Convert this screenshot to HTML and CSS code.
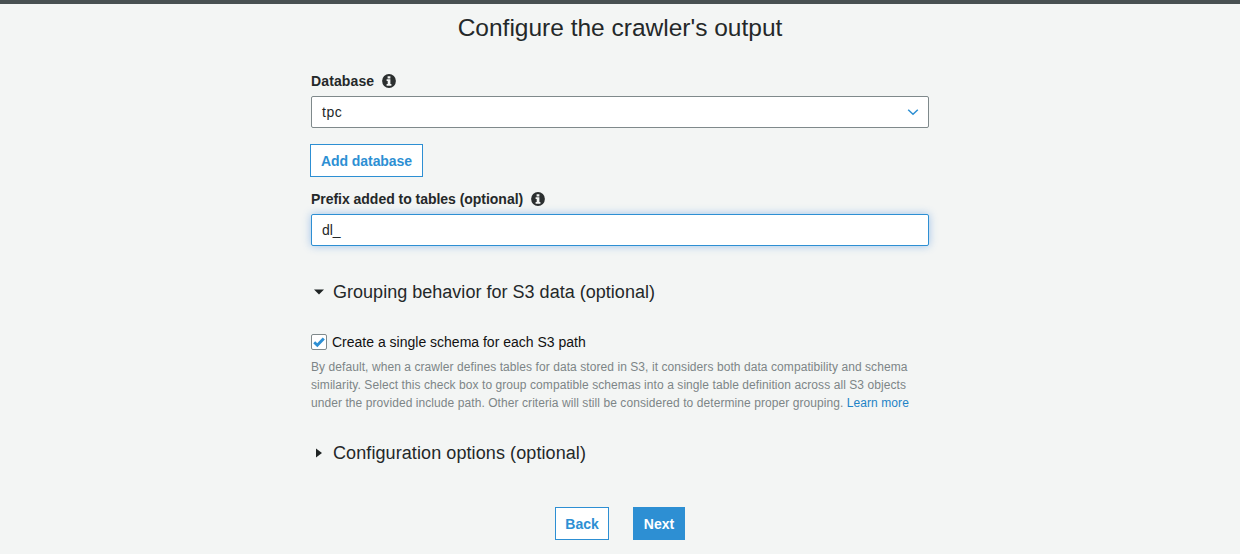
FILE: index.html
```
<!DOCTYPE html>
<html lang="en">
<head>
<meta charset="utf-8">
<title>Add crawler</title>
<link rel="stylesheet" href="styles.css">
</head>
<body>
<div class="topbar"></div>
<main class="wizard">
  <h1 class="title">Configure the crawler's output</h1>

  <div class="label"><span class="label-database">Database</span>
    <svg class="info" viewBox="0 0 14 14"><circle cx="7" cy="7" r="6.9" fill="#2b2f2f"/><path d="M5.600 2.200h2.800v2.200H5.600zM4.600 5.300h3.800v4.700h1v1.700H4.600V10h1.100V6.900H4.600z" fill="#f3f5f4"/></svg>
  </div>
  <div class="field select"><span class="value-database">tpc</span>
    <svg class="chevron" viewBox="0 0 12 8"><path d="M1.200 1.700 6 6.200l4.800-4.500" fill="none" stroke="#2d8fd3" stroke-width="1.500"/></svg>
  </div>
  <button class="btn add">Add database</button>

  <div class="label"><span class="label-prefix">Prefix added to tables (optional)</span>
    <svg class="info" viewBox="0 0 14 14"><circle cx="7" cy="7" r="6.900" fill="#2b2f2f"/><path d="M5.600 2.200h2.800v2.200H5.600zM4.600 5.300h3.800v4.700h1v1.700H4.600V10h1.100V6.900H4.600z" fill="#f3f5f4"/></svg>
  </div>
  <div class="field focused"><span class="value-prefix">dl_</span></div>

  <h2 class="section grouping"><svg class="caret" viewBox="0 0 10 10"><path d="M0 2.500h10L5 7.500z" fill="#1f2424"/></svg><span>Grouping behavior for S3 data (optional)</span></h2>

  <div class="check-row">
    <span class="checkbox"><svg viewBox="0 0 14 14"><path d="M2.200 7.300 5.300 10.300 11.800 3.400" fill="none" stroke="#2d8fd3" stroke-width="2.900"/></svg></span>
    <span class="check-label">Create a single schema for each S3 path</span>
  </div>
  <p class="help">
    <span class="line">By default, when a crawler defines tables for data stored in S3, it considers both data compatibility and schema</span>
    <span class="line">similarity. Select this check box to group compatible schemas into a single table definition across all S3 objects</span>
    <span class="line">under the provided include path. Other criteria will still be considered to determine proper grouping. <a class="link">Learn more</a></span>
  </p>

  <h2 class="section config"><svg class="caret" viewBox="0 0 10 10"><path d="M2 .5v9l6-4.500z" fill="#1f2424"/></svg><span>Configuration options (optional)</span></h2>

  <div class="actions">
    <button class="btn back">Back</button>
    <button class="btn next">Next</button>
  </div>
</main>
</body>
</html>
```
FILE: styles.css
```
* { box-sizing: border-box; }
body {
  margin: 0;
  height: 554px;
  overflow: hidden;
  background: #f3f5f4;
  color: #242829;
  font-family: "Liberation Sans", Arial, sans-serif;
  font-size: 14px;
}
.topbar { height: 4px; background: #485052; }
.wizard { width: 618px; margin: 0 auto; }
.title {
  margin: 9px 0 0;
  font-size: 24.5px;
  line-height: 30px;
  font-weight: 400;
  text-align: center;
  white-space: nowrap;
}
.label {
  display: flex;
  align-items: center;
  gap: 8px;
  height: 18px;
  font-weight: 700;
  line-height: 18px;
}
.label-database { letter-spacing: .12px; }
.label-prefix { letter-spacing: -.03px; }
.title + .label { margin-top: 29px; }
.info { width: 14px; height: 14px; }
.field {
  display: flex;
  align-items: center;
  justify-content: space-between;
  height: 32px;
  margin-top: 6px;
  padding: 0 9px 0 10px;
  border: 1px solid #7f898b;
  border-radius: 2px;
  background: #fff;
  line-height: 18px;
}
.value-database { letter-spacing: .5px; }
.value-prefix { letter-spacing: -.1px; }
.chevron { width: 12px; height: 8px; }
.focused {
  border-color: #2d8fd3;
  box-shadow: 0 0 9px rgba(45, 125, 220, .42);
}
.btn {
  height: 33px;
  padding: 0;
  border: 1px solid #2d8fd3;
  background: #fff;
  color: #2d8fd3;
  font: 700 14px/18px "Liberation Sans", Arial, sans-serif;
  text-align: center;
}
.add { display: block; width: 113px; margin: 16px 0 13px -1px; letter-spacing: -.06px; }
.section {
  display: flex;
  align-items: center;
  gap: 9px;
  height: 24px;
  padding-left: 3px;
  font-size: 18px;
  line-height: 24px;
  font-weight: 400;
  white-space: nowrap;
}
.caret { width: 10px; height: 10px; }
.grouping { margin: 34px 0 0; letter-spacing: .02px; }
.check-row {
  display: flex;
  align-items: center;
  gap: 5px;
  height: 18px;
  margin-top: 29px;
  line-height: 18px;
}
.checkbox {
  width: 16px;
  height: 16px;
  border: 1px solid #7f898b;
  border-radius: 2px;
  background: #fff;
}
.checkbox svg { display: block; width: 14px; height: 14px; }
.check-label { color: #111; }
.help {
  margin: 7px 0 0;
  color: #7d8587;
  font-size: 12px;
  line-height: 18px;
  letter-spacing: .073px;
}
.line { display: block; white-space: nowrap; }
.link { color: #1e83c6; }
.config { margin: 29px 0 0; letter-spacing: .09px; }
.actions {
  display: flex;
  justify-content: center;
  gap: 24px;
  margin-top: 42px;
}
.back { width: 54px; }
.next { width: 52px; background: #2d8fd3; color: #fff; }
```
